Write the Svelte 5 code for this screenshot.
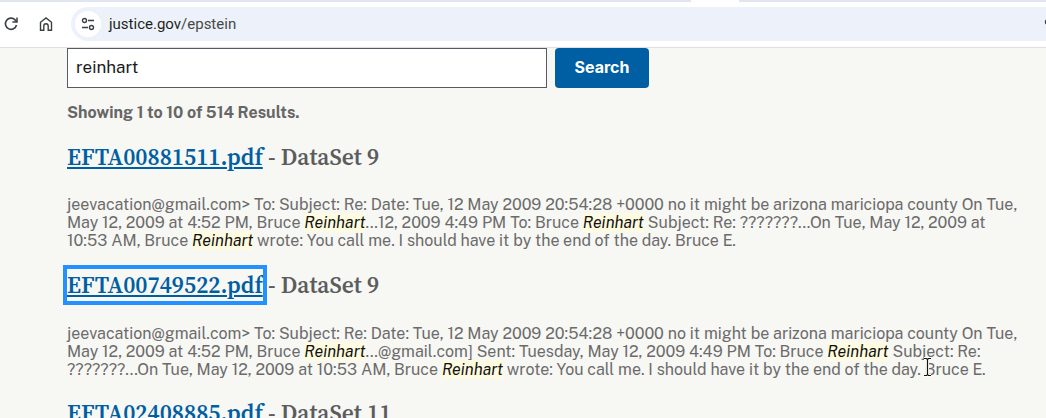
<script>
  const results = [
    { file: 'EFTA00881511.pdf', set: 'DataSet 9', focus: false, parts: ['jeevacation@gmail.com> To: Subject: Re: Date: Tue, 12 May 2009 20:54:28 +0000 no it might be arizona mariciopa county On Tue, May 12, 2009 at 4:52 PM, Bruce ', '...12, 2009 4:49 PM To: Bruce ', ' Subject: Re: ???????...On Tue, May 12, 2009 at 10:53 AM, Bruce ', ' wrote: You call me. I should have it by the end of the day. Bruce E.'] },
    { file: 'EFTA00749522.pdf', set: 'DataSet 9', focus: true, parts: ['jeevacation@gmail.com> To: Subject: Re: Date: Tue, 12 May 2009 20:54:28 +0000 no it might be arizona mariciopa county On Tue, May 12, 2009 at 4:52 PM, Bruce ', '...@gmail.com] Sent: Tuesday, May 12, 2009 4:49 PM To: Bruce ', ' Subject: Re: ???????...On Tue, May 12, 2009 at 10:53 AM, Bruce ', ' wrote: You call me. I should have it by the end of the day. Bruce E.'] }
  ];
</script>

<div class="frame">
  <div class="chrome">
    <div class="strip"><span class="tabgap"></span></div>
    <div class="toolbar">
      <svg class="reload" width="18" height="18" viewBox="0 0 18 18" fill="none" stroke="#3c4043" stroke-width="1.6"><path d="M14.500 10a5.600 5.600 0 1 1-1.400-5.100L14.800 6.600"/><path d="M15 2.500v4.600h-4.600" stroke-width="1.500"/></svg>
      <svg class="home" width="16" height="16" viewBox="0 0 16 16" fill="none" stroke="#3c4043" stroke-width="1.400"><path d="M2.500 14.300V6.300L8 2l5.500 4.300v8H10.200V10a2.200 2.200 0 0 0-4.400 0v4.300z"/></svg>
      <div class="omni">
        <span class="tune">
          <svg width="14" height="14" viewBox="0 0 14 14" fill="none" stroke="#3c4043" stroke-width="1.400"><circle cx="3.500" cy="3.500" r="2"/><path d="M7 3.500h6M1 10.500h6"/><circle cx="10.500" cy="10.500" r="2"/></svg>
        </span>
        <span class="url">justice.gov<span class="path">/epstein</span></span>
        <svg class="ext" width="10" height="14" viewBox="0 0 10 14" fill="none" stroke="#3c4043" stroke-width="1.500"><path d="M8 3H3.500a2 2 0 0 0 0 4h3a2 2 0 0 1 0 4H3"/></svg>
      </div>
    </div>
  </div>
  <main>
    <div class="searchrow">
      <div class="input">reinhart</div>
      <button>Search</button>
    </div>
    <p class="count">Showing 1 to 10 of 514 Results.</p>
    {#each results as r}
      <h3 class:first={!r.focus} class:second={r.focus}><a href="#x" class:focus={r.focus}>{r.file}</a> - {r.set}</h3>
      <p class="snippet">{r.parts[0]}<em>Reinhart</em>{r.parts[1]}<em>Reinhart</em>{r.parts[2]}<em>Reinhart</em>{r.parts[3]}</p>
    {/each}
    <h3 class="third"><a href="#x">EFTA02408885.pdf</a> - DataSet 11</h3>
  </main>
  <svg class="cursor" width="11" height="20" viewBox="0 0 11 20" fill="none"><path d="M2 1.500h2.500l1 1 1-1H9M5.500 2.500v15M2 18.500h2.500l1-1 1 1H9" stroke="#fff" stroke-width="3"/><path d="M2 1.500h2.500l1 1 1-1H9M5.500 2.500v15M2 18.500h2.500l1-1 1 1H9" stroke="#111" stroke-width="1.200"/></svg>
</div>

<style>
  :global(body) { margin: 0; background: #f7f7f4; }
  .frame { position: relative; width: 1046px; height: 418px; overflow: hidden; font-family: "Public Sans", Inter, "Liberation Sans", sans-serif; }
  .chrome { height: 48px; background: #fff; border-bottom: 1px solid #e0e0e0; box-sizing: border-box; }
  .strip { height: 2px; background: #e1e5f0; }
  .tabgap { display: block; width: 48px; height: 2px; margin-left: 691px; background: #fff; }
  .toolbar { display: flex; align-items: center; height: 34px; margin-top: 5px; }
  .reload { margin-left: 2px; }
  .home { margin-left: 18px; }
  .omni { display: flex; align-items: center; flex: 1; height: 34px; margin-left: 17px; background: #edf2fa; border-radius: 17px 0 0 17px; min-width: 0; }
  .tune { display: flex; align-items: center; justify-content: center; width: 26px; height: 26px; margin-left: 4px; border-radius: 50%; background: #fff; }
  .url { margin-left: 7px; padding-left: 1px; font: 15px Roboto, sans-serif; color: #1f1f1f; flex: 1; }
  .path { color: #474747; }
  .ext { margin-right: -8px; }
  main { padding: 0 0 0 67px; width: 955px; }
  .searchrow { display: flex; gap: 8px; height: 40px; }
  .input { width: 480px; height: 40px; box-sizing: border-box; border: 1px solid #565c65; background: #fff; padding: 0 8px; line-height: 36px; font-size: 17px; color: #1b1b1b; }
  button { width: 94px; height: 40px; border: 0; border-radius: 4px; background: #005ea2; color: #fff; font: 700 16px/38px Inter, sans-serif; padding: 0 0 2px; }
  .count { margin: 15px 0 0; font-size: 16px; line-height: 20px; font-weight: 700; color: #666; }
  h3 { font: 600 23.400px/30px "Source Serif 4", Merriweather, serif; color: #5c5c5c; }
  h3.first { margin: 19px 0 24px; }
  h3.second { margin: 20px 0 25px; }
  h3.third { margin: 19px 0 0; }
  h3 a { color: #005ea2; }
  a.focus { outline: 4px solid #2491ff; outline-offset: 0; }
  .snippet { margin: 0; font-size: 16px; line-height: 18px; color: #6b6b6b; }
  em { color: #111; background: #fffbe0; }
  .cursor { position: absolute; left: 922px; top: 357px; }
</style>
